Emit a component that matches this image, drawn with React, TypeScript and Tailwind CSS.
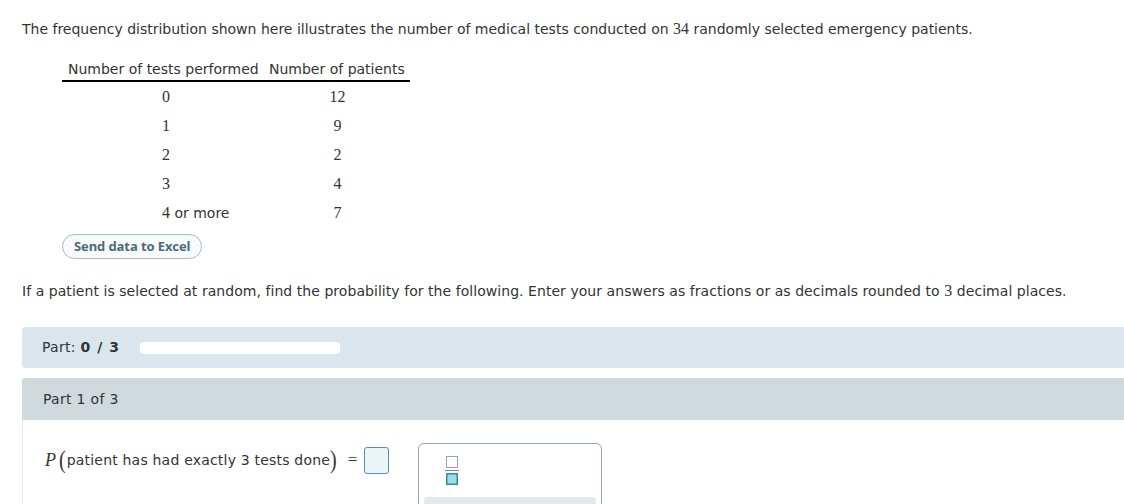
import React from 'react';

const rows = [
  { tests: '0', patients: '12' },
  { tests: '1', patients: '9' },
  { tests: '2', patients: '2' },
  { tests: '3', patients: '4' },
  { tests: '4', extra: ' or more', patients: '7' },
];

const Num: React.FC<{ children: React.ReactNode }> = ({ children }) => (
  <span className="font-['Liberation_Serif',serif] text-[16px]">{children}</span>
);

const FractionIcon: React.FC = () => (
  <svg width="14" height="30" viewBox="0 0 14 30" aria-hidden="true">
    <rect x="1.5" y="1.5" width="11" height="11" fill="#fff" stroke="#9aa3a8" strokeWidth="1" />
    <line x1="0" y1="15.5" x2="14" y2="15.5" stroke="#7d868b" strokeWidth="1" />
    <rect x="1.75" y="18.75" width="10.5" height="10.5" fill="#9fdce8" stroke="#2c8c9c" strokeWidth="1.5" />
  </svg>
);

export default function App() {
  return (
    <div className="w-full h-[504px] overflow-hidden bg-white text-[#333] font-['DejaVu_Sans','Verdana',sans-serif]">
      <div className="pl-[22px] pt-[19px]">
        <p className="text-[14px] leading-5">
          The frequency distribution shown here illustrates the number of medical tests conducted on <Num>34</Num> randomly selected emergency patients.
        </p>

        {/* frequency table */}
        <div className="ml-[40px] mt-[20px] w-[348px]">
          <div className="flex border-b-2 border-black text-[14px] leading-5 pb-[1px]">
            <div className="w-[203px] pl-[6px]">Number of tests performed</div>
            <div className="flex-1 pl-[4px]">Number of patients</div>
          </div>
          {rows.map((r) => (
            <div key={r.tests} className="flex h-[29px] items-center">
              <div className="w-[203px] pl-[100px]">
                <Num>{r.tests}</Num>
                {r.extra && <span className="text-[14px]">{r.extra}</span>}
              </div>
              <div className="flex-1 text-center">
                <Num>{r.patients}</Num>
              </div>
            </div>
          ))}
        </div>

        <button className="ml-[40px] mt-[7px] h-[25px] px-[11px] rounded-full border border-[#a9bcc4] bg-[#f7fafb] text-[13px] font-bold text-[#4d6b78] font-['Open_Sans',sans-serif] tracking-[-0.1px]">
          Send data to Excel
        </button>

        <p className="mt-[22px] text-[14px] leading-5 tracking-[0.05px]">
          If a patient is selected at random, find the probability for the following. Enter your answers as fractions or as decimals rounded to <Num>3</Num> decimal places.
        </p>

        {/* progress bar */}
        <div className="mt-[26px] h-[41px] bg-[#dae5ee] rounded-l-[4px] flex items-center pl-[20px] text-[14px] tracking-[0.3px]">
          <span>
            Part: <span className="font-bold tracking-[1px]">0 / 3</span>
          </span>
          <div className="ml-[20px] w-[200px] h-[12px] bg-white rounded-[3px]" />
        </div>

        {/* part 1 */}
        <div className="mt-[10px] h-[42px] bg-[#d0d9dc] rounded-tl-[3px] flex items-center pl-[21px] text-[14px] tracking-[0.3px]">
          Part 1 of 3
        </div>
        <div className="border-l border-[#e4e8ea] h-[100px] pl-[22px] pt-[24px] flex items-start">
          <div className="flex items-center h-[30px] mt-[1px]">
            <span className="font-['Liberation_Serif',serif] italic text-[18px]">P</span>
            <span className="font-['Liberation_Serif',serif] text-[20px] leading-none ml-[3px] -mt-[2px] scale-y-125">(</span>
            <span className="text-[14px] tracking-[0.2px] ml-[1px]">patient has had exactly 3 tests done</span>
            <span className="font-['Liberation_Serif',serif] text-[20px] leading-none -mt-[2px] scale-y-125">)</span>
            <span className="font-['Liberation_Serif',serif] text-[17px] ml-[11px]">=</span>
            <div className="ml-[7px] w-[25px] h-[27px] rounded-[3px] border border-[#5f8e9c] bg-[#e9f5f9]" />
          </div>
          <div className="ml-[29px] -mt-[1px] w-[184px] h-[80px] border border-[#9aa5aa] rounded-[6px] px-[5px] pt-[11px]">
            <div className="pl-[21px]">
              <FractionIcon />
            </div>
            <div className="mt-[12px] h-[20px] bg-[#e3e8eb] rounded-[3px]" />
          </div>
        </div>
      </div>
    </div>
  );
}
